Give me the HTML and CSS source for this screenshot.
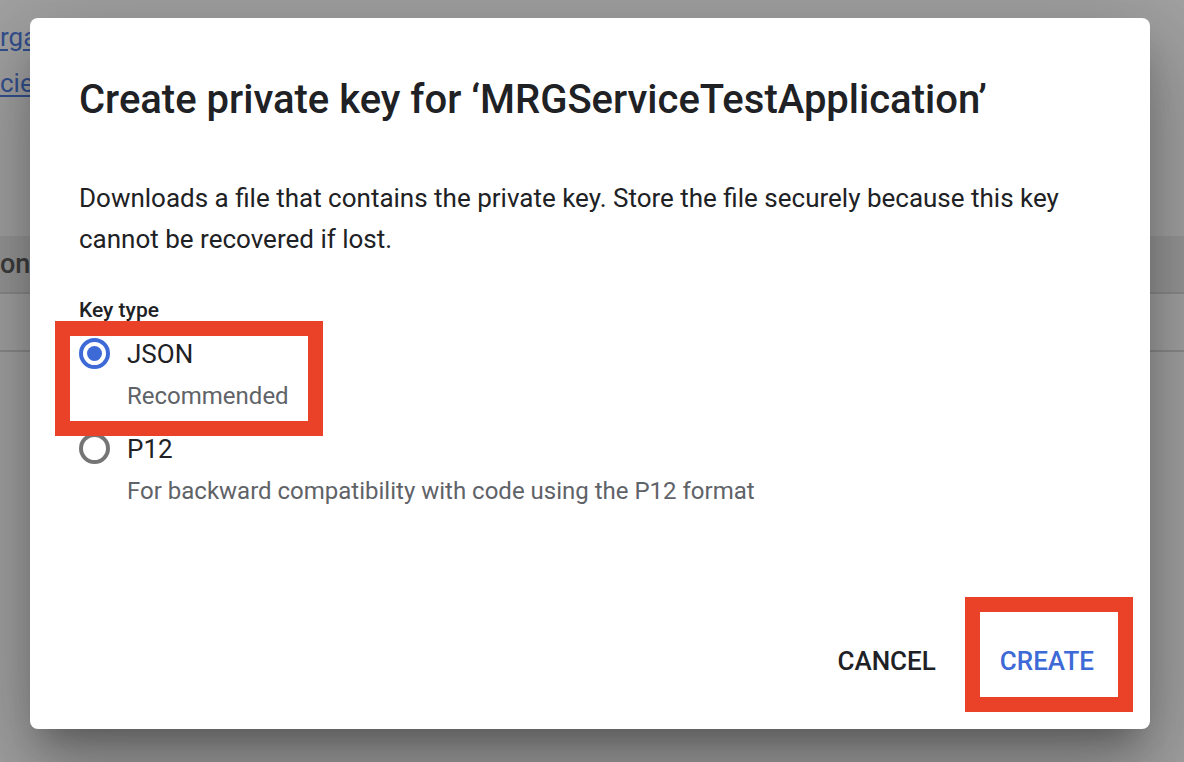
FILE: index.html
```html
<!DOCTYPE html>
<html lang="en">
<head>
<meta charset="utf-8">
<title>Create private key</title>
<link rel="stylesheet" href="styles.css">
</head>
<body>
<div class="page">
  <div class="bg-links">
    <a class="bg-link" href="#">rga</a>
    <a class="bg-link" href="#">cie</a>
  </div>
  <div class="bg-table">
    <div class="bg-head">on</div>
    <div class="bg-row"></div>
  </div>
</div>

<div class="dialog" role="dialog">
  <h1 class="title">Create private key for ‘MRGServiceTestApplication’</h1>
  <p class="desc">Downloads a file that contains the private key. Store the file securely because this key cannot be recovered if lost.</p>
  <div class="field-label">Key type</div>
  <div class="option">
    <span class="radio checked"></span>
    <div class="opt-text">
      <div class="opt-label">JSON</div>
      <div class="opt-hint">Recommended</div>
    </div>
  </div>
  <div class="option">
    <span class="radio"></span>
    <div class="opt-text">
      <div class="opt-label">P12</div>
      <div class="opt-hint">For backward compatibility with code using the P12 format</div>
    </div>
  </div>
  <div class="actions">
    <button class="btn">CANCEL</button>
    <button class="btn primary">CREATE</button>
  </div>
  <div class="mark mark-json"></div>
  <div class="mark mark-create"></div>
</div>
</body>
</html>
```
FILE: styles.css
```css
* { box-sizing: border-box; }
html, body {
  margin: 0;
  width: 1184px;
  height: 762px;
  overflow: hidden;
}
body {
  background: #a2a2a2;
  font-family: Roboto, "Liberation Sans", Arial, sans-serif;
  position: relative;
}
.page {
  display: flex;
  flex-direction: column;
}
.bg-links {
  display: flex;
  flex-direction: column;
  padding-top: 14px;
}
.bg-link {
  font-size: 26px;
  line-height: 46px;
  color: #33508f;
  text-decoration: underline;
  text-underline-offset: 3px;
  width: max-content;
}
.bg-table {
  margin-top: 130px;
}
.bg-head {
  height: 58px;
  line-height: 56px;
  font-size: 27px;
  font-weight: 500;
  color: #3d3d3d;
  background: #979797;
  border-bottom: 2px solid #8b8b8b;
}
.bg-row {
  height: 58px;
  border-bottom: 2px solid #8b8b8b;
}

.dialog {
  position: absolute;
  left: 30px;
  top: 18px;
  width: 1120px;
  height: 711px;
  background: #fff;
  border-radius: 8px;
  padding: 58px 48px 40px 49px;
  display: flex;
  flex-direction: column;
  box-shadow: 0 22px 30px -14px rgba(0,0,0,0.28),
              0 48px 76px 6px rgba(0,0,0,0.17),
              0 18px 92px 16px rgba(0,0,0,0.14);
}
.title {
  margin: 0;
  font-size: 40px;
  line-height: 48px;
  font-weight: 500;
  color: #202124;
  letter-spacing: 0;
}
.desc {
  margin: 54px 0 0;
  font-size: 26px;
  line-height: 41px;
  color: #202124;
  max-width: 1000px;
}
.field-label {
  margin-top: 38px;
  font-size: 21px;
  line-height: 24px;
  font-weight: 500;
  color: #202124;
}
.option {
  display: flex;
  align-items: flex-start;
  gap: 17px;
  margin-top: 11px;
}
.radio {
  flex: none;
  width: 31px;
  height: 31px;
  margin-top: 5px;
  border-radius: 50%;
  border: 4px solid #757575;
  display: flex;
  align-items: center;
  justify-content: center;
}
.radio.checked {
  border-color: #3d6ad6;
}
.radio.checked::after {
  content: "";
  width: 15px;
  height: 15px;
  border-radius: 50%;
  background: #3d6ad6;
}
.opt-label {
  font-size: 26px;
  line-height: 42px;
  color: #202124;
}
.opt-hint {
  font-size: 24px;
  line-height: 42px;
  color: #5f6368;
}
.actions {
  margin-top: auto;
  display: flex;
  justify-content: flex-end;
  gap: 30px;
  margin-right: -9px;
}
.btn {
  font-family: inherit;
  font-size: 26px;
  font-weight: 500;
  line-height: 56px;
  height: 56px;
  padding: 0 17px;
  border: 0;
  background: transparent;
  color: #202124;
}
.btn.primary {
  color: #3d6ad6;
}
.mark {
  position: absolute;
  border: 15px solid #ea4129;
  pointer-events: none;
}
.mark-json {
  left: 25px;
  top: 303px;
  width: 268px;
  height: 115px;
}
.mark-create {
  left: 935px;
  top: 579px;
  width: 168px;
  height: 115px;
}
```
